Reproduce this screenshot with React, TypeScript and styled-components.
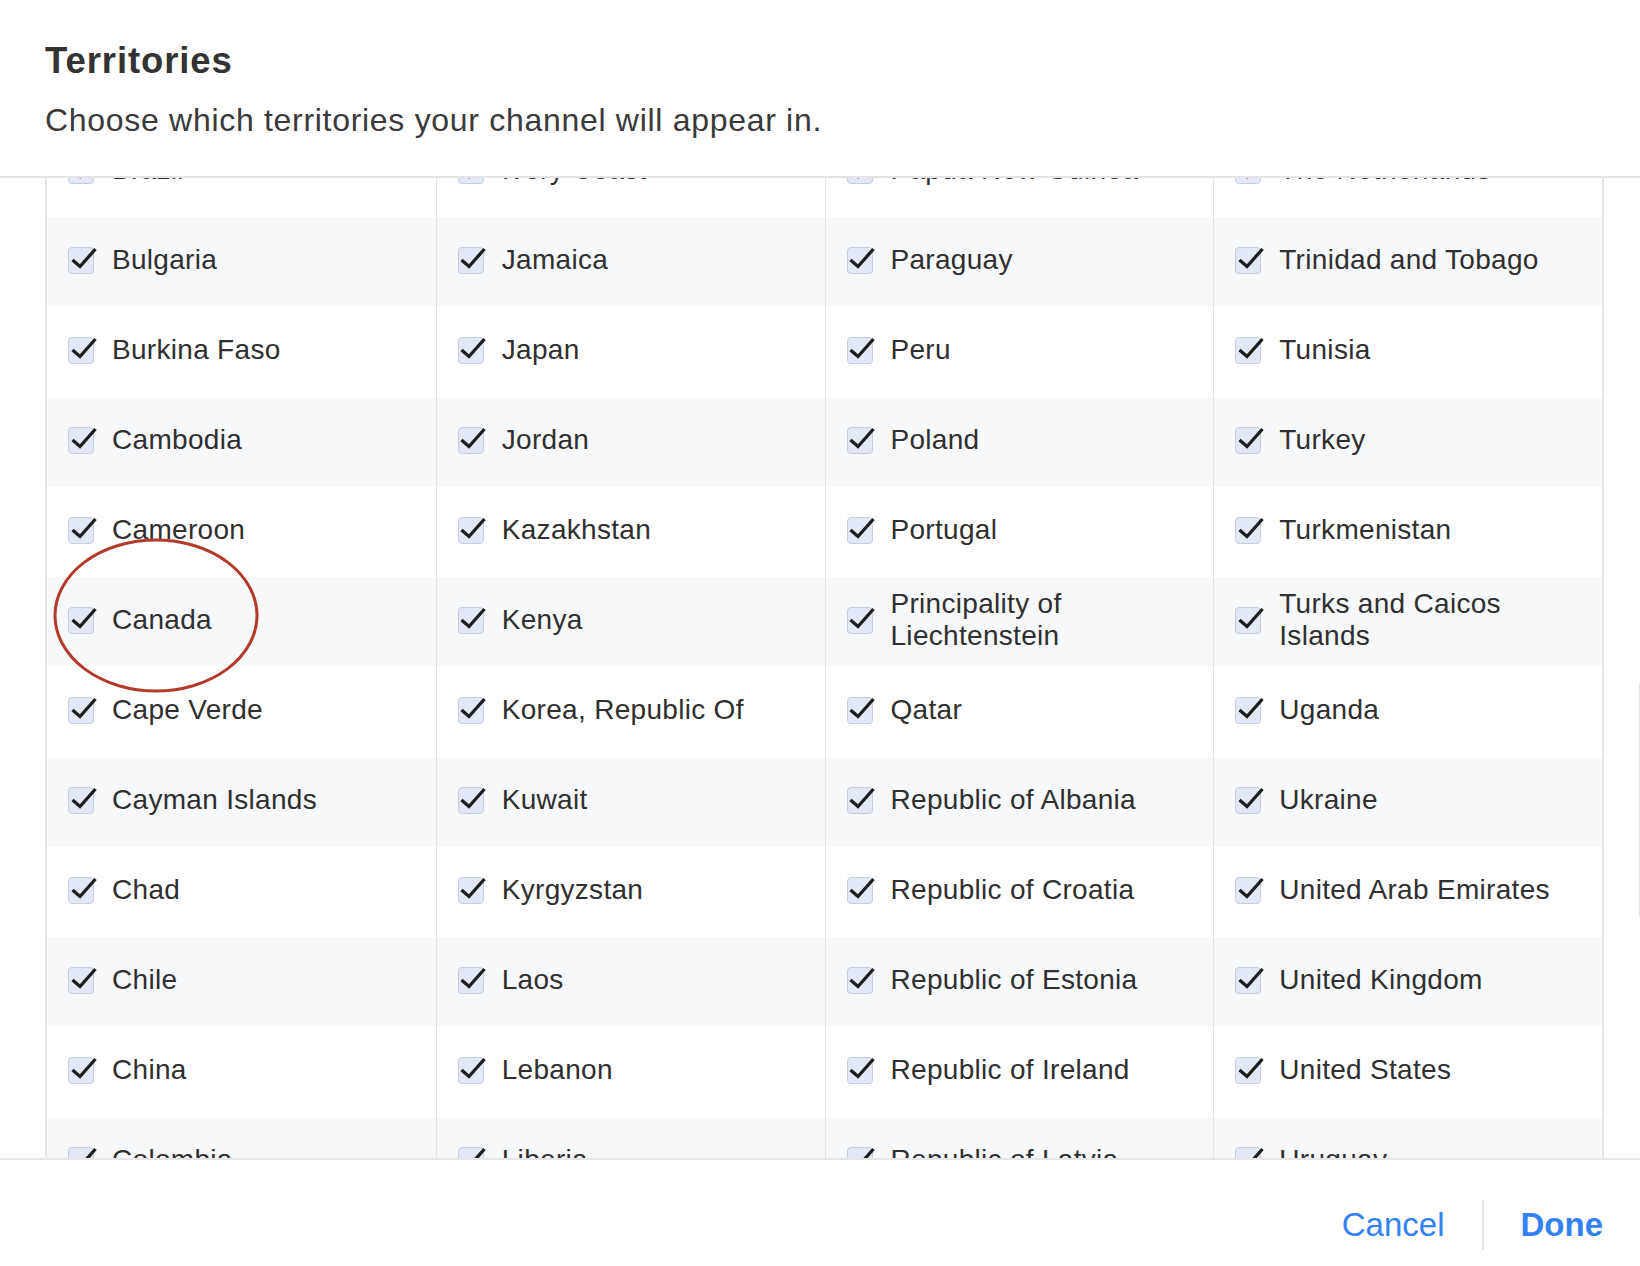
import React from "react";
import styled, { createGlobalStyle } from "styled-components";

const GlobalStyle = createGlobalStyle`
  html, body {
    margin: 0;
    padding: 0;
    background: #ffffff;
  }
  body {
    font-family: "Liberation Sans", Arial, sans-serif;
    -webkit-font-smoothing: antialiased;
  }
  * { box-sizing: border-box; }
`;

const Page = styled.div`
  position: relative;
  height: 1266px;
  display: flex;
  flex-direction: column;
  background: #ffffff;
  overflow: hidden;
`;

const Header = styled.header`
  padding: 39px 45px 36px 45px;
  border-bottom: 2px solid #e4e4e4;
  display: flex;
  flex-direction: column;
  gap: 17px;
  flex: none;
  position: relative;
  z-index: 2;
  background: #fff;
`;

const Title = styled.h1`
  margin: 0;
  font-size: 36.5px;
  line-height: 44px;
  font-weight: 700;
  letter-spacing: 0.9px;
  color: #333333;
`;

const Subtitle = styled.p`
  margin: 0;
  font-size: 32px;
  line-height: 40px;
  font-weight: 400;
  letter-spacing: 0.7px;
  color: #3a3a3a;
`;

const ScrollArea = styled.div`
  flex: 1;
  position: relative;
  overflow: hidden;
`;

const Table = styled.div`
  margin: -51px 36px 0 45px;
  border-left: 2px solid #e6e6e6;
  border-right: 2px solid #e6e6e6;
`;

const Row = styled.div<{ $striped: boolean }>`
  display: grid;
  grid-template-columns: repeat(4, 1fr);
  height: 90px;
  background: ${(p) => (p.$striped ? "#f7f8fa" : "#ffffff")};
`;

const Cell = styled.label`
  display: flex;
  align-items: center;
  gap: 18px;
  padding: 0 24px 4px 21px;
  border-left: 1px solid #e4e4e4;
  &:first-child {
    border-left: none;
  }
`;

const Box = styled.span`
  position: relative;
  flex: none;
  width: 26px;
  height: 27px;
  border-radius: 4px;
  border: 1.5px solid #c6cddd;
  background: #e2e8f6;
  display: block;
`;

const CheckSvg = styled.svg`
  position: absolute;
  left: -1.5px;
  top: -1.5px;
  overflow: visible;
`;

const Name = styled.span`
  font-size: 28px;
  line-height: 32px;
  letter-spacing: 0.3px;
  color: #2f2f2f;
`;

const ScrollThumb = styled.div`
  position: absolute;
  right: 0;
  top: 505px;
  width: 1px;
  height: 233px;
  background: #e6e6e6;
`;

const Footer = styled.footer`
  flex: none;
  height: 108px;
  border-top: 2px solid #e6e6e6;
  padding: 24px 37px 0 0;
  display: flex;
  align-items: center;
  justify-content: flex-end;
  gap: 37px;
  position: relative;
  z-index: 2;
  background: #fff;
`;

const FooterButton = styled.button<{ $primary?: boolean }>`
  border: none;
  background: none;
  padding: 0;
  margin: 0;
  cursor: pointer;
  font-family: "Liberation Sans", Arial, sans-serif;
  font-size: 33px;
  line-height: 40px;
  font-weight: ${(p) => (p.$primary ? 700 : 400)};
  color: #3581f3;
`;

const Divider = styled.span`
  width: 2px;
  height: 50px;
  background: #e4e4e4;
  display: block;
`;

const Annotation = styled.svg`
  position: absolute;
  left: 50px;
  top: 535px;
  pointer-events: none;
  z-index: 3;
`;

const rows: string[][] = [
  ["Brazil", "Ivory Coast", "Papua New Guinea", "The Netherlands"],
  ["Bulgaria", "Jamaica", "Paraguay", "Trinidad and Tobago"],
  ["Burkina Faso", "Japan", "Peru", "Tunisia"],
  ["Cambodia", "Jordan", "Poland", "Turkey"],
  ["Cameroon", "Kazakhstan", "Portugal", "Turkmenistan"],
  ["Canada", "Kenya", "Principality of Liechtenstein", "Turks and Caicos Islands"],
  ["Cape Verde", "Korea, Republic Of", "Qatar", "Uganda"],
  ["Cayman Islands", "Kuwait", "Republic of Albania", "Ukraine"],
  ["Chad", "Kyrgyzstan", "Republic of Croatia", "United Arab Emirates"],
  ["Chile", "Laos", "Republic of Estonia", "United Kingdom"],
  ["China", "Lebanon", "Republic of Ireland", "United States"],
  ["Colombia", "Liberia", "Republic of Latvia", "Uruguay"],
];

function Checkbox() {
  return (
    <Box role="checkbox" aria-checked="true">
      <CheckSvg width="26" height="27" viewBox="0 0 26 27">
        <polyline
          points="4.5,14 12,20.5 27.5,3"
          fill="none"
          stroke="#1e1e1e"
          strokeWidth="3.3"
          strokeLinecap="butt"
          strokeLinejoin="miter"
        />
      </CheckSvg>
    </Box>
  );
}

export default function App() {
  return (
    <>
      <GlobalStyle />
      <Page>
        <Header>
          <Title>Territories</Title>
          <Subtitle>Choose which territories your channel will appear in.</Subtitle>
        </Header>
        <ScrollArea>
          <Table>
            {rows.map((r, i) => (
              <Row key={i} $striped={i % 2 === 1}>
                {r.map((name) => (
                  <Cell key={name}>
                    <Checkbox />
                    <Name>{name}</Name>
                  </Cell>
                ))}
              </Row>
            ))}
          </Table>
          <ScrollThumb />
        </ScrollArea>
        <Footer>
          <FooterButton>Cancel</FooterButton>
          <Divider />
          <FooterButton $primary>Done</FooterButton>
        </Footer>
        <Annotation width="212" height="162" viewBox="0 0 212 162">
          <ellipse cx="106" cy="80.5" rx="101" ry="75.5" fill="none" stroke="#b23a2c" strokeWidth="3" />
        </Annotation>
      </Page>
    </>
  );
}
